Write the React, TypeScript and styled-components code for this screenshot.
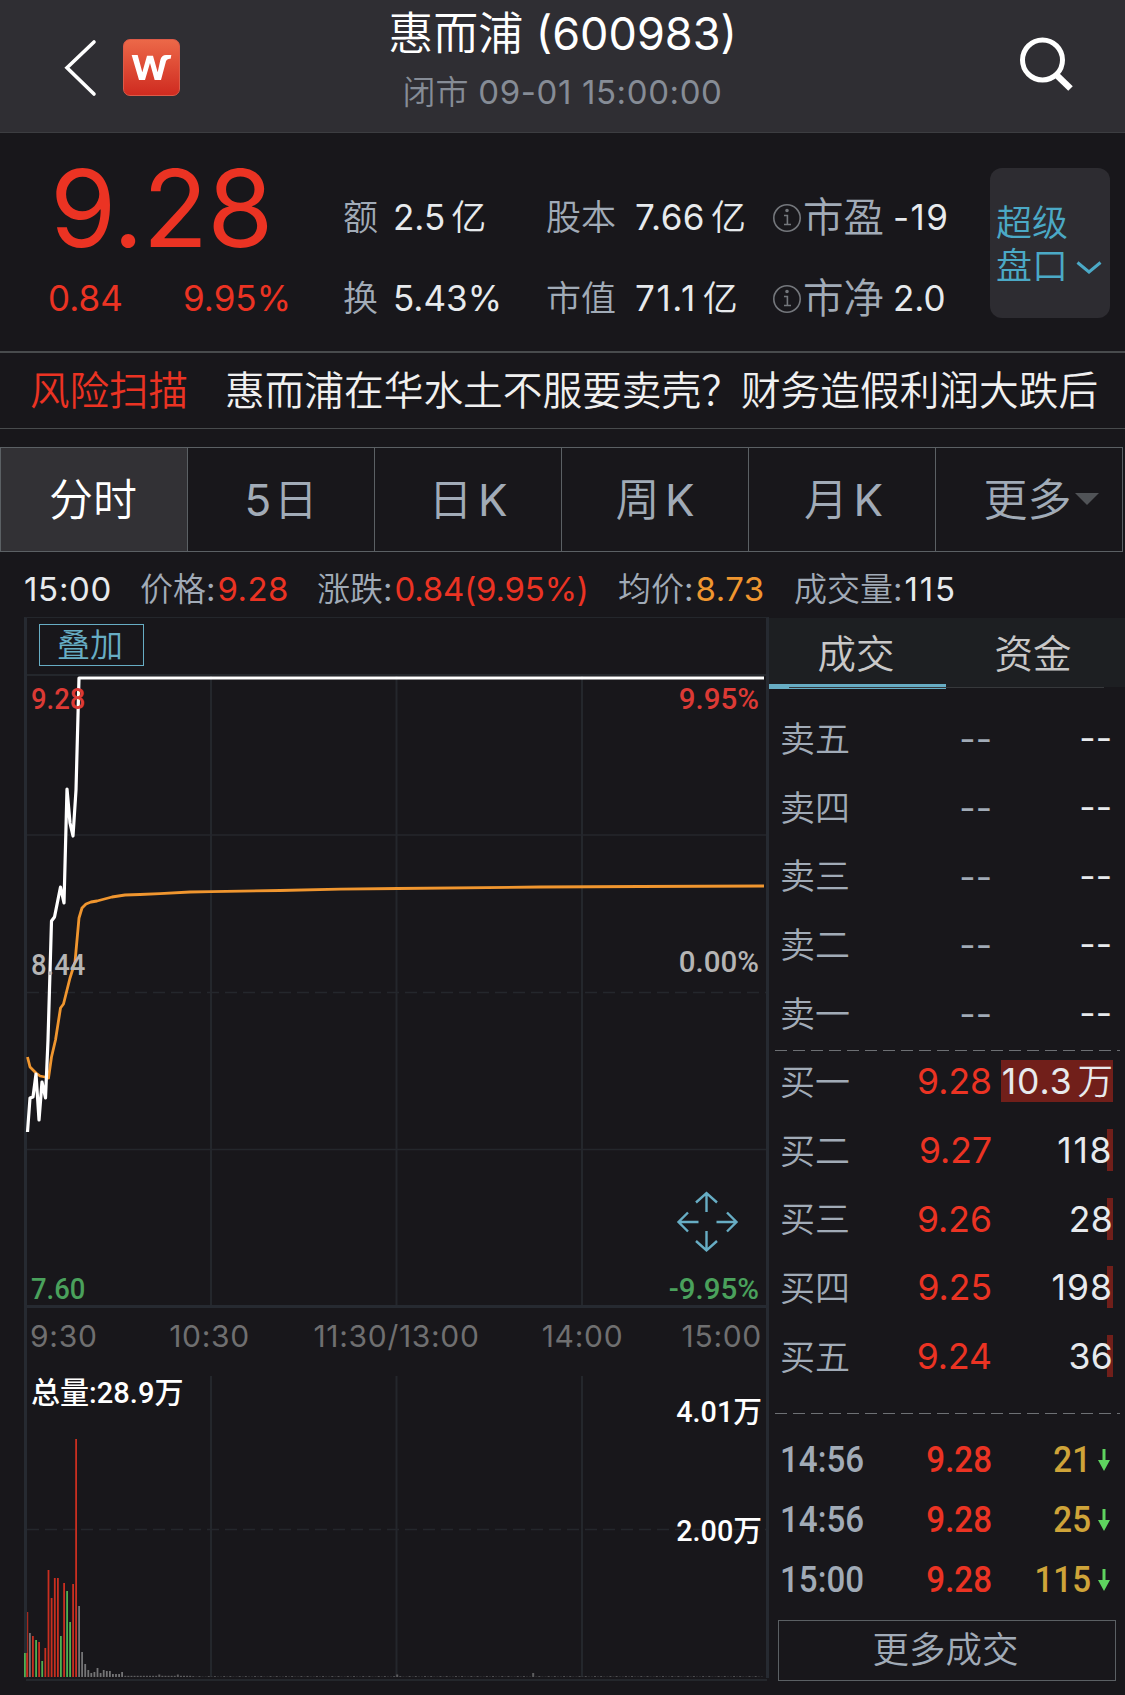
import React from "react";
import styled, { createGlobalStyle } from "styled-components";

const sans = `Inter, "Noto Sans CJK SC", sans-serif`;
const din = `Roboto, "Noto Sans CJK SC", sans-serif`;

const c = {
  bg: "#18171b",
  bar: "#2f2e33",
  label: "#a1abb7",
  value: "#e7eaed",
  red: "#eb3323",
  orange: "#f0962f",
  blue: "#67adc4",
  grid: "#24272c",
  frame: "#262a31",
};

const Global = createGlobalStyle`
  * { box-sizing: border-box; }
  body { margin: 0; background: ${c.bg}; }
`;

const Screen = styled.div`
  width: 1125px;
  height: 1695px;
  overflow: hidden;
  display: flex;
  flex-direction: column;
  background: ${c.bg};
  font-family: ${sans};
  font-weight: 370;
  color: ${c.value};
  white-space: nowrap;
`;

const Text = styled.span<{ $size?: number; $color?: string; $ls?: number }>`
  display: block;
  font-size: ${(p) => p.$size ?? 34}px;
  color: ${(p) => p.$color ?? c.value};
  letter-spacing: ${(p) => p.$ls ?? 0}px;
`;

const Han = styled.span<{ $gap?: number }>`
  display: inline-block;
  font-family: "Noto Sans CJK SC", sans-serif;
  font-weight: 350;
  letter-spacing: 0;
  line-height: 1;
  margin-left: ${(p) => p.$gap ?? 0}px;
`;

/* ---------- header ---------- */

const Header = styled.header`
  height: 133px;
  flex: none;
  display: grid;
  grid-template-columns: 59px 57px 143px 1fr 323px;
  padding-left: 64px;
  background: ${c.bar};
  border-bottom: 1px solid #3c3d41;
`;

const HeaderIcon = styled.div<{ $top: number; $left?: number }>`
  padding-top: ${(p) => p.$top}px;
  padding-left: ${(p) => p.$left ?? 0}px;
  svg { display: block; }
`;

const Brand = styled.div`
  width: 57px;
  height: 57px;
  margin-top: 39px;
  border-radius: 7px;
  background: linear-gradient(#ec6848, #cf2b20);
  border: 1px solid #dc5a48;
`;

const Titles = styled.div`
  display: flex;
  flex-direction: column;
  align-items: center;
`;

const Title = styled.h1`
  margin: 0;
  padding-top: 3px;
  font-size: 45px;
  line-height: 61px;
  font-weight: inherit;
  color: #fff;
`;

const Subtitle = styled.div`
  font-size: 33px;
  line-height: 57px;
  letter-spacing: 0.6px;
  color: #868c96;
`;

/* ---------- quote ---------- */

const Quote = styled.section`
  height: 218px;
  flex: none;
  display: grid;
  grid-template-columns: 343px 203px 227px 217px 120px;
`;

const PriceBlock = styled.div`
  padding-left: 48px;
  color: ${c.red};
`;

const BigPrice = styled.div`
  padding: 15px 0 0 2px;
  font-size: 107px;
  line-height: 120px;
  letter-spacing: -0.8px;
`;

const Changes = styled.div`
  display: grid;
  grid-template-columns: 135px 1fr;
  line-height: 60px;
`;

const FieldColumn = styled.div`
  padding-top: 44px;
  display: grid;
  grid-template-rows: 81px 81px;
`;

const Field = styled.div<{ $label: number }>`
  display: grid;
  grid-template-columns: ${(p) => p.$label}px 1fr;
  line-height: 81px;
`;

const InfoLabel = styled.div`
  display: flex;
  align-items: center;
  gap: 2px;
`;

const DepthButton = styled.div`
  width: 120px;
  height: 150px;
  margin-top: 35px;
  padding: 31px 0 0 6px;
  border-radius: 12px;
  background: #2d2c31;
  color: #4ba9c6;
  font-family: "Noto Sans CJK SC", sans-serif;
  font-weight: 350;
  font-size: 36px;
  line-height: 43px;
`;

const DepthLine = styled.div`
  display: flex;
  align-items: center;
  gap: 8px;
  svg { position: relative; top: 4px; }
`;

/* ---------- risk news ---------- */

const Risk = styled.section`
  height: 78px;
  flex: none;
  display: grid;
  grid-template-columns: 195px 1fr;
  padding-left: 30px;
  border-top: 2px solid #484b4d;
  border-bottom: 1px solid #484b4d;
  font-family: "Noto Sans CJK SC", sans-serif;
  font-weight: 350;
  font-size: 39.7px;
  line-height: 70px;
`;

const RiskTag = styled.div`
  color: ${c.red};
  font-size: 39.5px;
`;

const Headline = styled.div`
  color: #f0f0f0;
`;

/* ---------- period tabs ---------- */

const Tabs = styled.nav`
  height: 105px;
  flex: none;
  margin-top: 18px;
  width: 1123px;
  display: grid;
  grid-template-columns: repeat(5, 187px) 1fr;
  border: 1px solid #5b6064;
`;

const Tab = styled.div<{ $active?: boolean; $left?: number; $right?: number }>`
  position: relative;
  height: 103px;
  padding-left: ${(p) => p.$left ?? 0}px;
  padding-right: ${(p) => p.$right ?? 0}px;
  font-size: 44px;
  line-height: 105px;
  text-align: center;
  color: ${(p) => (p.$active ? "#fff" : c.label)};
  background: ${(p) => (p.$active ? "#323135" : "transparent")};
  border-right: 1px solid #5b6064;
  &:last-child { border-right: 0; }
`;

const Unit = styled.span`
  margin-left: 5.5px;
`;

const Caret = styled.i`
  position: absolute;
  right: 23px;
  top: 45px;
  border: 12px solid transparent;
  border-top-color: #505357;
  border-bottom: 0;
`;

/* ---------- readout ---------- */

const Readout = styled.section`
  height: 65px;
  flex: none;
  display: grid;
  grid-template-columns: 116px 177px 301px 176px 1fr;
  padding-left: 24px;
  line-height: 74px;
`;

const Pair = styled.div`
  display: flex;
  gap: 2px;
`;

/* ---------- main ---------- */

const Main = styled.main`
  flex: 1;
  display: grid;
  grid-template-columns: 745px 1fr;
  padding-left: 24px;
`;

const ChartColumn = styled.div`
  height: 1061px;
  display: flex;
  flex-direction: column;
  border-left: 3px solid ${c.frame};
  border-right: 3px solid ${c.frame};
  border-top: 1px solid ${c.grid};
`;

const Tools = styled.div`
  height: 56px;
  flex: none;
  padding: 6px 0 0 12px;
`;

const OverlayButton = styled.div`
  width: 105px;
  height: 42px;
  padding-right: 3px;
  border: 1.5px solid ${c.blue};
  color: ${c.blue};
  font-family: "Noto Sans CJK SC", sans-serif;
  font-weight: 350;
  font-size: 33px;
  line-height: 37px;
  text-align: center;
`;

const Pane = styled.div<{ $h: number }>`
  position: relative;
  height: ${(p) => p.$h}px;
  flex: none;
  svg { display: block; overflow: visible; }
`;

const Mark = styled.span<{ $y: number; $right?: number; $color?: string; $narrow?: number }>`
  position: absolute;
  top: ${(p) => p.$y - 20}px;
  ${(p) => (p.$right ? `right: ${p.$right}px;` : "left: 4px;")}
  font-family: ${din};
  font-weight: 500;
  font-size: 29.5px;
  line-height: 40px;
  color: ${(p) => p.$color ?? "#fff"};
  transform: scaleX(${(p) => p.$narrow ?? 1});
  transform-origin: ${(p) => (p.$right ? "right" : "left")} center;
`;

const Axis = styled.div`
  height: 68px;
  flex: none;
  display: grid;
  grid-template-columns: 90px 185px 189px 183px 88px;
  font-size: 30px;
  line-height: 57px;
  letter-spacing: 0.7px;
  color: #6f6f70;
  text-align: center;
  span:first-child { text-align: left; padding-left: 3px; }
  span:last-child { text-align: right; }
`;

/* ---------- order book ---------- */

const Book = styled.aside`
  padding-top: 1px;
  display: flex;
  flex-direction: column;
`;

const BookTabs = styled.div`
  height: 69px;
  flex: none;
  display: grid;
  grid-template-columns: 177px 1fr;
  background: #1d1f22;
`;

const BookTab = styled.div<{ $active?: boolean }>`
  font-family: "Noto Sans CJK SC", sans-serif;
  font-weight: 350;
  font-size: 38.5px;
  line-height: 66px;
  color: #c8c8c8;
  text-align: center;
  padding-right: ${(p) => (p.$active ? 3 : 5)}px;
  border-bottom: ${(p) => (p.$active ? `5px solid ${c.blue}` : "0")};
`;

const Rule = styled.div`
  height: 1px;
  flex: none;
  margin: 0 21px 0 20px;
  background: #36383b;
`;

const Ladder = styled.div<{ $top: number; $h: number }>`
  margin-top: ${(p) => p.$top}px;
  height: ${(p) => p.$h}px;
  flex: none;
`;

const Level = styled.div`
  height: 68.7px;
  display: grid;
  grid-template-columns: 111px 101px 1fr;
  align-items: center;
  padding: 0 12px 0 11px;
  line-height: 42px;
`;

const LevelName = styled.div`
  padding-top: 1px;
`;

const LevelPrice = styled.div<{ $empty: boolean }>`
  text-align: right;
  font-size: 35.5px;
  line-height: ${(p) => (p.$empty ? 46 : 44)}px;
  height: 42px;
  color: ${(p) => (p.$empty ? c.label : c.red)};
`;

const Size = styled.div<{ $bar: number; $ls: number }>`
  height: 42px;
  padding-right: ${(p) => (p.$bar ? 0 : 1)}px;
  text-align: right;
  font-size: 35.5px;
  letter-spacing: ${(p) => p.$ls}px;
  line-height: ${(p) => (p.$bar ? 43 : 44)}px;
  background: linear-gradient(#711f1a, #711f1a) right / ${(p) => p.$bar}px 100% no-repeat;
`;

const Dashes = styled.div`
  height: 1px;
  flex: none;
  margin: 0 5px 0 6px;
  background: repeating-linear-gradient(90deg, #6d7074 0 12px, transparent 12px 18px);
`;

const Trades = styled.div`
  margin-top: 16px;
  flex: none;
`;

const Trade = styled.div`
  height: 60px;
  display: grid;
  grid-template-columns: 111px 101px 99px 1fr;
  align-items: center;
  padding-left: 11px;
  font-family: ${din};
  font-weight: 500;
  font-size: 36px;
  line-height: 60px;
`;

const Cell = styled.span<{ $color: string; $right?: boolean }>`
  color: ${(p) => p.$color};
  text-align: ${(p) => (p.$right ? "right" : "left")};
  transform: scaleX(0.92);
  transform-origin: ${(p) => (p.$right ? "right" : "left")} center;
`;

const ArrowBox = styled.span`
  padding-left: 6px;
  svg { display: block; }
`;

const MoreButton = styled.div`
  margin: 10px 9px 0;
  height: 61px;
  flex: none;
  border: 1.5px solid #5b6064;
  color: ${c.label};
  font-family: "Noto Sans CJK SC", sans-serif;
  font-weight: 350;
  font-size: 36.5px;
  line-height: 54px;
  padding-right: 3px;
  text-align: center;
`;

/* ---------- data ---------- */

const price: [number, number][] = [
  [27.5, 1132], [30, 1098], [33, 1097], [36, 1074], [39, 1120], [42, 1082],
  [45.5, 1098], [48, 1040], [51.5, 921], [54.5, 917], [60.5, 887], [64, 903],
  [67, 789], [70, 823], [73, 836], [76, 790], [79, 678], [764, 678],
];

const average: [number, number][] = [
  [27.5, 1057], [30, 1067], [36, 1073], [40, 1076], [45, 1077], [48.5, 1078],
  [51.5, 1057], [55.5, 1040], [60.5, 1008], [63.5, 1004], [70, 978], [75, 962],
  [79, 918], [82, 908], [86, 904], [91, 902], [97, 901], [112, 897], [125, 895],
  [140, 894.5], [160, 893.6], [190, 892], [211, 891.7], [280, 890.5], [340, 889.2],
  [398, 888.5], [540, 887], [640, 886.5], [764, 886],
];

const toPoints = (list: [number, number][]) =>
  list.map(([x, y]) => `${x - 27},${y - 674}`).join(" ");

const R = "#c92f20";
const G = "#4fb052";
const N = "#747476";

const volume: [number, number, string][] = [
  [24, 24, G], [26.2, 24, R], [29, 44, N], [32, 41, R], [35.2, 37, G], [38.2, 35, R],
  [41.3, 16, G], [44.4, 29, R], [47.6, 107, R], [50.7, 79, R], [53.9, 99, R], [57, 99, R],
  [60, 41, G], [63.2, 94, R], [66.2, 86, G], [69.2, 55, G], [72.2, 93, R], [75.2, 238, R],
  [78.2, 71, N], [81.2, 25, N], [84.3, 13, N], [87.4, 7, N], [90.4, 4, N], [93.5, 5, N],
  [96.6, 9, N], [99.7, 4, N], [102.8, 7, N], [105.9, 6, N], [109, 6, N], [112, 3, N],
  [115.1, 3, N], [118.2, 3, N], [121.2, 5, N],
];

const swells: Record<number, number> = { 11: 2.5, 17: 2.5, 88: 2.5, 132: 4 };

const tail = Array.from({ length: 207 }, (_, i) => {
  const x = 124.3 + i * 3.09;
  const quiet = i > 22 && (i * 7) % 5 < 3;
  return { x, h: swells[i] ?? (quiet ? 0.3 : i < 22 ? 1.2 : 0.8) };
});

const asks = ["卖五", "卖四", "卖三", "卖二", "卖一"];
const bids = [
  { name: "买一", price: "9.28", size: "10.3", unit: "万", bar: 112, ls: 0.9 },
  { name: "买二", price: "9.27", size: "118", bar: 6, ls: 1.6 },
  { name: "买三", price: "9.26", size: "28", bar: 6, ls: 0.3 },
  { name: "买四", price: "9.25", size: "198", bar: 6, ls: 1 },
  { name: "买五", price: "9.24", size: "36", bar: 6, ls: 0.3 },
];
const trades = [
  ["14:56", "9.28", "21"],
  ["14:56", "9.28", "25"],
  ["15:00", "9.28", "115"],
];

const InfoIcon = () => (
  <svg width="28" height="30" viewBox="0 0 28 30" fill="none" stroke="#74777c" strokeWidth="1.6">
    <circle cx="14" cy="15" r="13.2" />
    <path d="M11 12.5h3.4v8.5M11 21.5h7" />
    <circle cx="14" cy="7.5" r="1" fill="#74777c" />
  </svg>
);

const Verticals = ({ h }: { h: number }) => (
  <g stroke={c.grid} strokeWidth="2">
    <path d={`M184 0V${h}M369.5 0V${h}M555 0V${h}`} />
  </g>
);

export default function App() {
  return (
    <Screen>
      <Global />
      <Header>
        <HeaderIcon $top={38}>
          <svg width="34" height="60" viewBox="0 0 34 60" fill="none" stroke="#fff" strokeWidth="3.6" strokeLinecap="round">
            <path d="M30 4L3 29.7L30 56" />
          </svg>
        </HeaderIcon>
        <Brand>
          <svg width="55" height="55" viewBox="0 0 55 55" fill="#fff">
            <path
              transform="translate(-14 -10) scale(0.3333)"
              d="M65 75H83L97 127L111 77H129L143 127L151 90Q155 75 168 75H184L182 86Q171 85 168 94L153 150H134L120 99L105 150H87Z"
            />
          </svg>
        </Brand>
        <span />
        <Titles>
          <Title><Han>惠而浦</Han> (600983)</Title>
          <Subtitle><Han>闭市</Han> 09-01 15:00:00</Subtitle>
        </Titles>
        <HeaderIcon $top={34} $left={215}>
          <svg width="60" height="60" viewBox="0 0 60 60" fill="none" stroke="#fff" strokeWidth="5">
            <circle cx="25.5" cy="26" r="20" />
            <path d="M39 40.5L53.5 54.5" strokeWidth="6.5" />
          </svg>
        </HeaderIcon>
      </Header>

      <Quote>
        <PriceBlock>
          <BigPrice>9.28</BigPrice>
          <Changes>
            <Text $size={35} $color={c.red}>0.84</Text>
            <Text $size={35} $color={c.red}>9.95%</Text>
          </Changes>
        </PriceBlock>
        <FieldColumn>
          <Field $label={50}>
            <Text $size={35} $color={c.label}><Han>额</Han></Text>
            <Text $size={35}>2.5<Han $gap={6}>亿</Han></Text>
          </Field>
          <Field $label={50}>
            <Text $size={35} $color={c.label}><Han>换</Han></Text>
            <Text $size={35}>5.43%</Text>
          </Field>
        </FieldColumn>
        <FieldColumn>
          <Field $label={89}>
            <Text $size={35} $color={c.label}><Han>股本</Han></Text>
            <Text $size={35} $ls={0.5}>7.66<Han $gap={6}>亿</Han></Text>
          </Field>
          <Field $label={89}>
            <Text $size={35} $color={c.label}><Han>市值</Han></Text>
            <Text $size={35} $ls={1.6}>71.1<Han $gap={6}>亿</Han></Text>
          </Field>
        </FieldColumn>
        <FieldColumn>
          <Field $label={120}>
            <InfoLabel><InfoIcon /><Text $size={40.5} $color={c.label}><Han>市盈</Han></Text></InfoLabel>
            <Text $size={35} $ls={1.4}>-19</Text>
          </Field>
          <Field $label={120}>
            <InfoLabel><InfoIcon /><Text $size={40.5} $color={c.label}><Han>市净</Han></Text></InfoLabel>
            <Text $size={35}>2.0</Text>
          </Field>
        </FieldColumn>
        <DepthButton>
          <DepthLine>超级</DepthLine>
          <DepthLine>
            盘口
            <svg width="26" height="16" viewBox="0 0 26 16" fill="none" stroke="#4ba9c6" strokeWidth="3">
              <path d="M1.5 2.5L13 12L24.5 2.5" />
            </svg>
          </DepthLine>
        </DepthButton>
      </Quote>

      <Risk>
        <RiskTag>风险扫描</RiskTag>
        <Headline>惠而浦在华水土不服要卖壳？财务造假利润大跌后</Headline>
      </Risk>

      <Tabs>
        <Tab $active $right={2}><Han>分时</Han></Tab>
        <Tab>5<Han $gap={2.5}>日</Han></Tab>
        <Tab><Han>日</Han><Unit>K</Unit></Tab>
        <Tab><Han>周</Han><Unit>K</Unit></Tab>
        <Tab $left={3}><Han>月</Han><Unit>K</Unit></Tab>
        <Tab $right={3}><Han>更多</Han><Caret /></Tab>
      </Tabs>

      <Readout>
        <Text $size={33} $ls={0.7}>15:00</Text>
        <Pair>
          <Text $size={33} $color={c.label}><Han>价格</Han>:</Text>
          <Text $size={33} $color={c.red} $ls={0.4}>9.28</Text>
        </Pair>
        <Pair>
          <Text $size={33} $color={c.label}><Han>涨跌</Han>:</Text>
          <Text $size={33} $color={c.red} $ls={-0.2}>0.84(9.95%)</Text>
        </Pair>
        <Pair>
          <Text $size={33} $color={c.label}><Han>均价</Han>:</Text>
          <Text $size={33} $color={c.orange} $ls={0.5}>8.73</Text>
        </Pair>
        <Pair>
          <Text $size={33} $color={c.label}><Han>成交量</Han>:</Text>
          <Text $size={33} $ls={1.8}>115</Text>
        </Pair>
      </Readout>

      <Main>
        <ChartColumn>
          <Tools><OverlayButton>叠加</OverlayButton></Tools>
          <Pane $h={634}>
            <svg width="739" height="634" viewBox="0 0 739 634" fill="none">
              <Verticals h={632} />
              <g stroke={c.grid}>
                <path d="M0 1H739" strokeWidth="2" />
                <path d="M0 161H739M0 475.5H739" strokeWidth="1.5" />
                <path d="M0 318.5H739" strokeWidth="1.5" strokeDasharray="12 6" />
                <path d="M0 632.5H739" strokeWidth="3" stroke={c.frame} />
              </g>
              <polyline points={toPoints(average)} stroke={c.orange} strokeWidth="2.8" strokeLinejoin="round" />
              <polyline points={toPoints(price)} stroke="#fff" strokeWidth="3.2" strokeLinejoin="round" />
              <g stroke={c.blue} strokeWidth="2.4" transform="translate(679.5 548)">
                <path d="M0 -10V-29M-10.5 -19.5L0 -29L10.5 -19.5" />
                <path d="M0 9V28.5M-10.5 19L0 28.5L10.5 19" />
                <path d="M-8 0H-28M-18.5 -9.5L-28 0L-18.5 9.5" />
                <path d="M10 0H30M20.5 -9.5L30 0L20.5 9.5" />
              </g>
            </svg>
            <Mark $y={25} $color="#dc3a35" $narrow={0.93}>9.28</Mark>
            <Mark $y={25} $color="#dc3a35" $right={7}>9.95%</Mark>
            <Mark $y={291} $color="#b5b5b5" $narrow={0.93}>8.44</Mark>
            <Mark $y={288} $color="#b5b5b5" $right={7}>0.00%</Mark>
            <Mark $y={615} $color="#4aa15c" $narrow={0.93}>7.60</Mark>
            <Mark $y={615} $color="#4aa15c" $right={7}>-9.95%</Mark>
          </Pane>
          <Axis>
            <span>9:30</span>
            <span>10:30</span>
            <span>11:30/13:00</span>
            <span>14:00</span>
            <span>15:00</span>
          </Axis>
          <Pane $h={301}>
            <svg width="739" height="301" viewBox="0 0 739 301" fill="none">
              <Verticals h={301} />
              <path d="M0 153.5H739" stroke={c.grid} strokeWidth="1.5" strokeDasharray="12 6" />
              <path d="M-1 304H740" stroke={c.grid} strokeWidth="2" />
              <rect x="0.2" y="236" width="1" height="65" fill={R} />
              {volume.map(([x, h, fill]) => (
                <rect key={x} x={x - 27} y={301 - h} width="1.8" height={h} fill={fill} />
              ))}
              {tail.map((b) => (
                <rect key={b.x} x={b.x - 27} y={301 - b.h} width="2" height={b.h} fill="#5d5d5f" />
              ))}
            </svg>
            <Mark $y={17} $narrow={0.985}>总量:28.9万</Mark>
            <Mark $y={36} $right={4} $narrow={0.975}>4.01万</Mark>
            <Mark $y={155} $right={4} $narrow={0.975}>2.00万</Mark>
          </Pane>
        </ChartColumn>

        <Book>
          <BookTabs>
            <BookTab $active>成交</BookTab>
            <BookTab>资金</BookTab>
          </BookTabs>
          <Rule />
          <Ladder $top={16} $h={346}>
            {asks.map((name) => (
              <Level key={name}>
                <LevelName><Text $size={35} $color={c.label}><Han>{name}</Han></Text></LevelName>
                <LevelPrice $empty>--</LevelPrice>
                <Size $bar={0} $ls={0}>--</Size>
              </Level>
            ))}
          </Ladder>
          <Dashes />
          <Ladder $top={-4} $h={366}>
            {bids.map((b) => (
              <Level key={b.name}>
                <LevelName><Text $size={35} $color={c.label}><Han>{b.name}</Han></Text></LevelName>
                <LevelPrice $empty={false}>{b.price}</LevelPrice>
                <Size $bar={b.bar} $ls={b.ls}>{b.size}{b.unit && <Han $gap={5}>{b.unit}</Han>}</Size>
              </Level>
            ))}
          </Ladder>
          <Dashes />
          <Trades>
            {trades.map(([time, p, n]) => (
              <Trade key={time + n}>
                <Cell $color={c.label}>{time}</Cell>
                <Cell $color={c.red} $right>{p}</Cell>
                <Cell $color="#cfa439" $right>{n}</Cell>
                <ArrowBox>
                  <svg width="14" height="24" viewBox="0 0 14 24" fill="#5ed45f">
                    <path d="M5.5 1H8.5V12H13L7 23L1 12H5.5Z" />
                  </svg>
                </ArrowBox>
              </Trade>
            ))}
          </Trades>
          <MoreButton>更多成交</MoreButton>
        </Book>
      </Main>
    </Screen>
  );
}
